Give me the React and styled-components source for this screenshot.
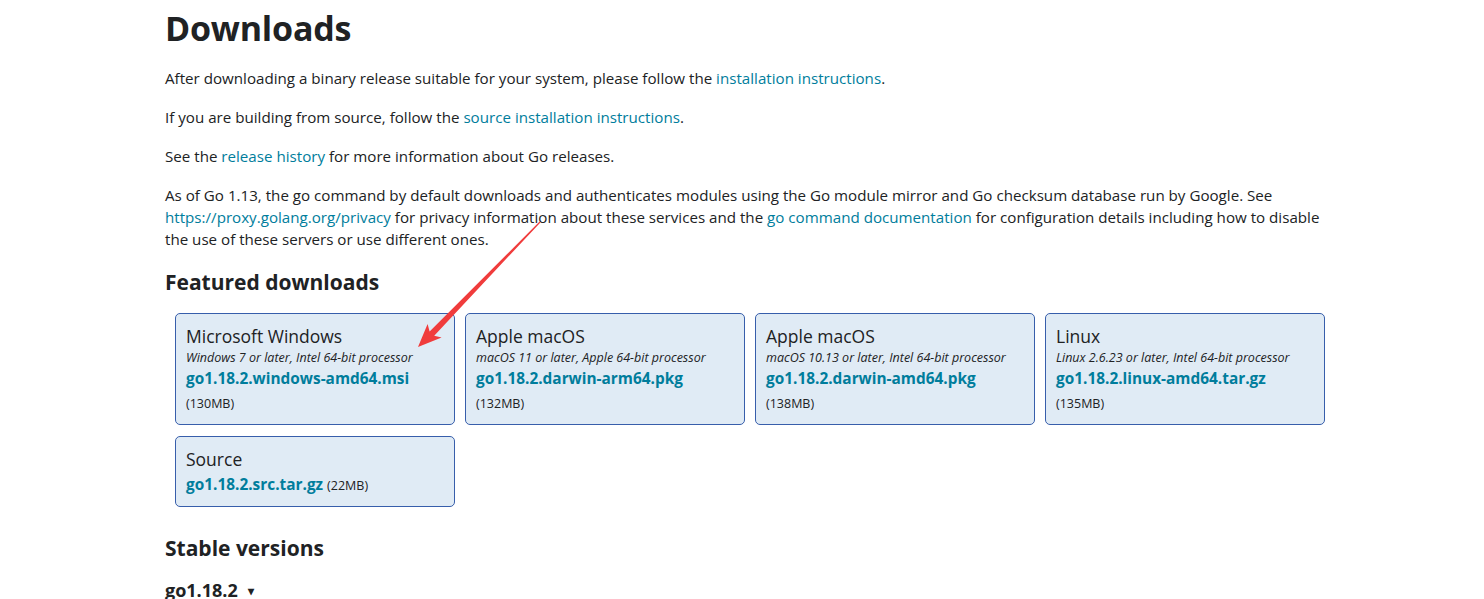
import styled, { createGlobalStyle } from 'styled-components';

const GlobalStyle = createGlobalStyle`
  html, body {
    margin: 0;
    padding: 0;
    background: #fff;
  }
  body {
    font-family: "Open Sans", "Noto Sans", "Liberation Sans", sans-serif;
    color: #202224;
    font-size: 16px;
  }
`;

const featured = [
  {
    os: 'Microsoft Windows',
    req: 'Windows 7 or later, Intel 64-bit processor',
    file: 'go1.18.2.windows-amd64.msi',
    size: '130MB',
  },
  {
    os: 'Apple macOS',
    req: 'macOS 11 or later, Apple 64-bit processor',
    file: 'go1.18.2.darwin-arm64.pkg',
    size: '132MB',
  },
  {
    os: 'Apple macOS',
    req: 'macOS 10.13 or later, Intel 64-bit processor',
    file: 'go1.18.2.darwin-amd64.pkg',
    size: '138MB',
  },
  {
    os: 'Linux',
    req: 'Linux 2.6.23 or later, Intel 64-bit processor',
    file: 'go1.18.2.linux-amd64.tar.gz',
    size: '135MB',
  },
];

function Arrow() {
  // red annotation arrow drawn over the page
  return (
    <ArrowSvg width="1484" height="599" viewBox="0 0 1484 599">
      <polygon
        points="540.4,222.4 434.2,335.8 441.6,337.6 418,347 427.6,324 429.6,331.4 539.6,221.6"
        fill="#f03c3c"
      />
    </ArrowSvg>
  );
}

export default function App() {
  return (
    <Page>
      <GlobalStyle />
      <Main>
        <Title>Downloads</Title>
        <Para>
          After downloading a binary release suitable for your system, please follow the{' '}
          <Link>installation instructions</Link>.
        </Para>
        <Para>
          If you are building from source, follow the <Link>source installation instructions</Link>.
        </Para>
        <Para>
          See the <Link>release history</Link> for more information about Go releases.
        </Para>
        <Para>
          As of Go 1.13, the go command by default downloads and authenticates modules using the Go module mirror and Go checksum database run by Google. See
          <br />
          <Link>https://proxy.golang.org/privacy</Link> for privacy information about these services and the{' '}
          <Link>go command documentation</Link> for configuration details including how to disable
          <br />
          the use of these servers or use different ones.
        </Para>

        <SectionTitle>Featured downloads</SectionTitle>
        <CardGrid>
          {featured.map((d) => (
            <Card key={d.file}>
              <CardOs>{d.os}</CardOs>
              <CardReq>{d.req}</CardReq>
              <CardFile>{d.file}</CardFile>
              <CardSize>({d.size})</CardSize>
            </Card>
          ))}
          <Card compact>
            <CardOs>Source</CardOs>
            <SourceLine>
              <CardFile inline>go1.18.2.src.tar.gz</CardFile>
              <CardSize inline>(22MB)</CardSize>
            </SourceLine>
          </Card>
        </CardGrid>

        <SectionTitle stable>Stable versions</SectionTitle>
        <Version>
          go1.18.2 <Caret>▾</Caret>
        </Version>
      </Main>
      <Arrow />
    </Page>
  );
}

const Page = styled.div`
  position: relative;
  width: 1484px;
  height: 599px;
  overflow: hidden;
`;

const Main = styled.main`
  width: 1170px;
  padding-left: 165px;
`;

const Title = styled.h1`
  margin: 0;
  padding-top: 8px;
  font-size: 34px;
  line-height: 40px;
  font-weight: 700;
  letter-spacing: -0.2px;
`;

const Para = styled.p`
  margin: 19px 0 0;
  font-size: 15.15px;
  line-height: 22px;

  & + & {
    margin-top: 17px;
  }
`;

const Link = styled.a`
  color: #007d9c;
  text-decoration: none;
`;

const SectionTitle = styled.h2`
  margin: ${(p) => (p.stable ? '27px' : '18px')} 0 0;
  font-size: 21px;
  line-height: 28px;
  font-weight: 700;
`;

const CardGrid = styled.div`
  display: grid;
  grid-template-columns: repeat(4, 280px);
  gap: 11px 10px;
  margin: 17px 0 0 10px;
`;

const Card = styled.div`
  box-sizing: border-box;
  height: ${(p) => (p.compact ? '71px' : '112px')};
  padding: 10px 10px;
  background: #e0ebf5;
  border: 1px solid #375eab;
  border-radius: 5px;
`;

const CardOs = styled.div`
  font-size: 17.5px;
  line-height: 24px;
`;

const CardReq = styled.div`
  margin-top: 1px;
  font-size: 12.5px;
  line-height: 17px;
  font-style: italic;
`;

const CardFile = styled.div`
  display: ${(p) => (p.inline ? 'inline' : 'block')};
  margin-top: ${(p) => (p.inline ? '0' : '3px')};
  color: #007d9c;
  font-size: 15.4px;
  line-height: 20px;
  font-weight: 700;
`;

const CardSize = styled.div`
  display: ${(p) => (p.inline ? 'inline' : 'block')};
  margin: ${(p) => (p.inline ? '0 0 0 4px' : '6px 0 0')};
  font-size: 12.5px;
  line-height: 17px;
`;

const SourceLine = styled.div`
  margin-top: 2px;
`;

const Version = styled.div`
  margin-top: 16px;
  font-size: 18px;
  line-height: 24px;
  font-weight: 700;
`;

const Caret = styled.span`
  margin-left: 6px;
  font-size: 12px;
  vertical-align: 2px;
`;

const ArrowSvg = styled.svg`
  position: absolute;
  left: 0;
  top: 0;
  pointer-events: none;
`;
